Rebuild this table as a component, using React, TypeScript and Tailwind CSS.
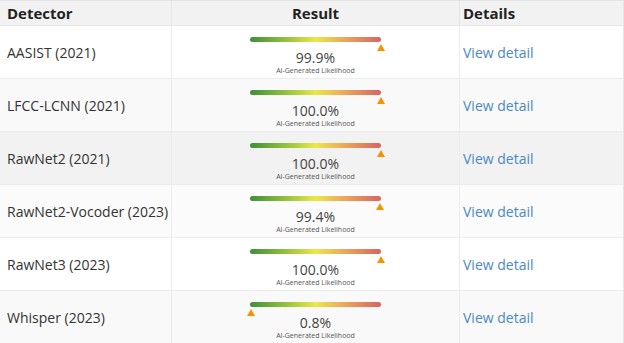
const rows = [
  { name: "AASIST (2021)", pct: 99.9, bg: "bg-white" },
  { name: "LFCC-LCNN (2021)", pct: 100.0, bg: "bg-[#f9f9f9]" },
  { name: "RawNet2 (2021)", pct: 100.0, bg: "bg-[#f2f2f2]" },
  { name: "RawNet2-Vocoder (2023)", pct: 99.4, bg: "bg-[#fbfbfb]" },
  { name: "RawNet3 (2023)", pct: 100.0, bg: "bg-white" },
  { name: "Whisper (2023)", pct: 0.8, bg: "bg-[#f9f9f9]" },
];

function Meter({ pct }: { pct: number }) {
  return (
    <div className="flex flex-col items-center pt-[11px]">
      <div className="relative w-[131px]">
        <div className="h-[5px] w-full rounded-full bg-[linear-gradient(to_right,#3f8f3a,#9cc63f_30%,#e9e84a_50%,#eba85a_72%,#d86464)]" />
        <div
          className="absolute top-[7px] -ml-[4px] h-0 w-0 border-x-[4px] border-b-[7px] border-x-transparent border-b-[#f59300]"
          style={{ left: `${pct}%` }}
        />
      </div>
      <div className="mt-[7px] text-[14px] leading-[17px] text-[#444]">{pct.toFixed(1)}%</div>
      <div className="text-[7px] leading-[9px] text-[#555]">AI-Generated Likelihood</div>
    </div>
  );
}

export default function App() {
  return (
    <div className="h-[343px] w-[624px] overflow-hidden bg-white font-['Open_Sans',sans-serif] text-[#222]">
      <div className="border-r border-t border-[#e6e6e6]">
        <div className="grid h-[25px] grid-cols-[172px_288px_1fr] border-b border-[#e6e6e6] bg-[#f2f2f2] text-[15px] font-bold">
          <div className="flex items-center border-r border-[#e6e6e6] pl-[7px]">Detector</div>
          <div className="flex items-center justify-center border-r border-[#e6e6e6]">Result</div>
          <div className="flex items-center pl-[3px]">Details</div>
        </div>
        {rows.map((r) => (
          <div
            key={r.name}
            className={`grid h-[53px] grid-cols-[172px_288px_1fr] border-b border-[#ececec] ${r.bg}`}
          >
            <div className="flex items-center whitespace-nowrap border-r border-[#ececec] pl-[7px] text-[14px] text-[#333]">
              {r.name}
            </div>
            <div className="border-r border-[#ececec]">
              <Meter pct={r.pct} />
            </div>
            <div className="flex items-center pl-[3px] text-[14px] text-[#4a88c7]">View detail</div>
          </div>
        ))}
      </div>
    </div>
  );
}
